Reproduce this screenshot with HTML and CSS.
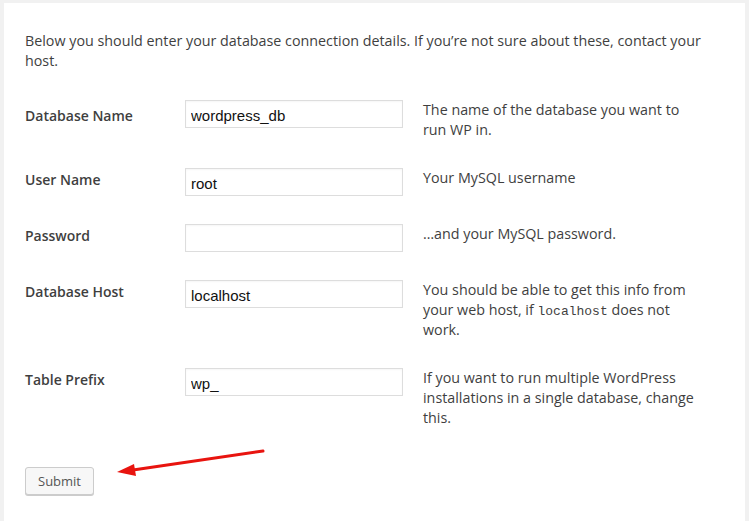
FILE: index.html
```html
<!DOCTYPE html>
<html>
<head>
<meta charset="utf-8">
<link rel="stylesheet" href="styles.css">
</head>
<body>
<div class="panel">
  <p class="intro">Below you should enter your database connection details. If you’re not sure about these, contact your host.</p>
  <form class="form-table">
    <div class="row">
      <label class="label">Database Name</label>
      <div class="field"><input class="input" type="text" value="wordpress_db"></div>
      <div class="desc">The name of the database you want to run WP in.</div>
    </div>
    <div class="row">
      <label class="label">User Name</label>
      <div class="field"><input class="input" type="text" value="root"></div>
      <div class="desc">Your MySQL username</div>
    </div>
    <div class="row">
      <label class="label">Password</label>
      <div class="field"><input class="input" type="text" value=""></div>
      <div class="desc">…and your MySQL password.</div>
    </div>
    <div class="row">
      <label class="label">Database Host</label>
      <div class="field"><input class="input" type="text" value="localhost"></div>
      <div class="desc">You should be able to get this info from your web host, if <code>localhost</code> does not work.</div>
    </div>
    <div class="row">
      <label class="label">Table Prefix</label>
      <div class="field"><input class="input" type="text" value="wp_"></div>
      <div class="desc">If you want to run multiple WordPress installations in a single database, change this.</div>
    </div>
    <div class="step"><button class="button" type="button">Submit</button></div>
  </form>
</div>
<svg class="arrow" width="160" height="40" viewBox="0 0 160 40">
  <line x1="150" y1="6" x2="20" y2="25" stroke="#e8140f" stroke-width="3" stroke-linecap="round"/>
  <polygon points="4,27 21,19 23,31" fill="#e8140f"/>
</svg>
</body>
</html>
```
FILE: styles.css
```css
html, body {
  margin: 0;
  padding: 0;
}
body {
  background: #f1f1f1;
  padding: 3px 4px 0 4px;
  height: 518px;
  overflow: hidden;
  position: relative;
  font-family: "Open Sans", "Noto Sans", sans-serif;
  font-size: 14.3px;
  line-height: 20px;
  color: #3f3f3f;
}
.panel {
  background: #fff;
  height: 100%;
  padding: 28px 32px 0 21px;
  box-sizing: border-box;
}
.intro {
  margin: 0 0 15px 0;
}
.row {
  display: grid;
  grid-template-columns: 140px 218px 280px;
  column-gap: 20px;
}
.label {
  font-weight: 600;
  font-size: 14px;
  padding: 16px 0 14px 0;
}
.row:first-child .label {
  padding-top: 20px;
}
.field {
  padding: 14px 0;
}
.input {
  display: block;
  box-sizing: border-box;
  width: 218px;
  height: 28px;
  margin: 0;
  border: 1px solid #ddd;
  padding: 2px 5px 0 5px;
  font-family: "Liberation Sans", Arial, sans-serif;
  font-size: 15px;
  color: #111;
  background: #fff;
  box-shadow: inset 0 1px 2px rgba(0,0,0,0.04);
  outline: none;
}
.desc {
  padding: 14px 0;
}
.desc code {
  font-family: "Liberation Mono", monospace;
  font-size: 13px;
  line-height: 1;
}
.step {
  padding-top: 25px;
}
.button {
  height: 28px;
  padding: 0 12px 1px 12px;
  border: 1px solid #ccc;
  border-radius: 3px;
  background: #f7f7f7;
  box-shadow: 0 1px 0 #ccc;
  font-family: "Open Sans", "Noto Sans", sans-serif;
  font-size: 13px;
  color: #555;
  line-height: 26px;
}
.arrow {
  position: absolute;
  left: 113px;
  top: 445px;
}
```
